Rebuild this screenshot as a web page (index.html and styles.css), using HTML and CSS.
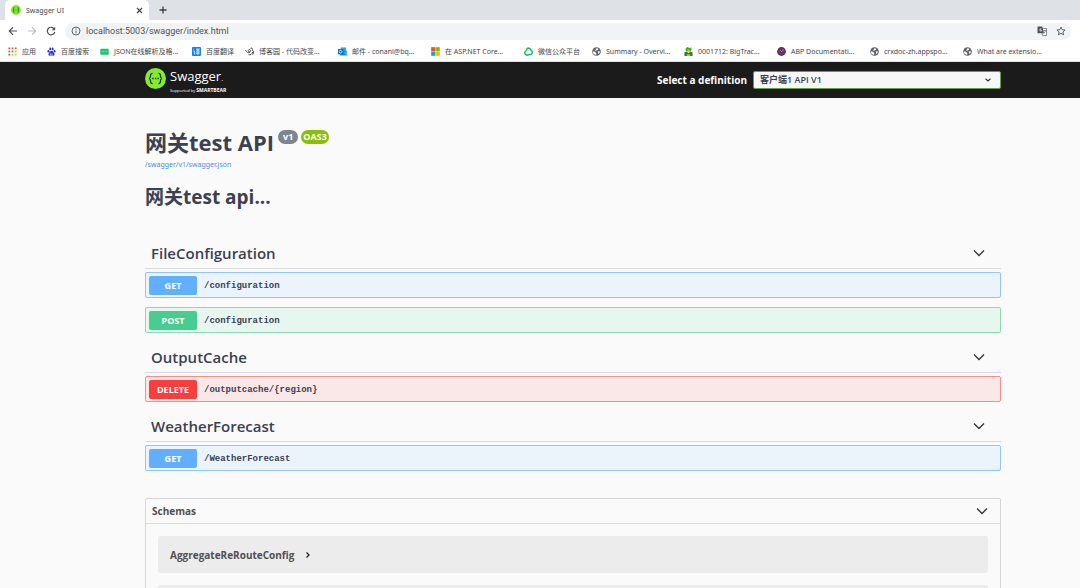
FILE: index.html
```
<!DOCTYPE html>
<html lang="en">
<head>
<meta charset="utf-8">
<title>Swagger UI</title>
<link rel="stylesheet" href="styles.css">
</head>
<body>
<svg class="defs" aria-hidden="true">
  <symbol id="globe" viewBox="0 0 10 10"><circle cx="5" cy="5" r="4.800" fill="#5f6368"/><path d="M.9 4.600l2.300.8 1.500 1.200v2C2.800 8.800.9 7.200.9 4.600zM5 1.300l2 .6-.6 1.300-1.400.4-.4.8-1.200-.6zM6.500 4.800l2.400.2-.8 2-1.400.4z" fill="#fff"/></symbol>
  <symbol id="chevron" viewBox="0 0 12 8"><path d="M1 1.500l5 5 5-5" fill="none" stroke="#333" stroke-width="1.300"/></symbol>
  <symbol id="swagger" viewBox="0 0 22 22"><circle cx="11" cy="11" r="11" fill="#85ea2d"/><path d="M8 5.500c-2 0-2.200.8-2.200 2.500C5.800 10 5.500 10.700 4.300 11c1.200.3 1.500 1 1.500 3 0 1.700.2 2.500 2.200 2.500M14 5.500c2 0 2.200.8 2.200 2.500 0 2 .3 2.700 1.500 3-1.200.3-1.500 1-1.500 3 0 1.700-.2 2.500-2.200 2.500" fill="none" stroke="#173647" stroke-width="1.300"/><path d="M7.500 11h1.500M10.300 11h1.500M13 11h1.500" stroke="#173647" stroke-width="1.500"/></symbol>
</svg>

<div class="tabstrip">
  <div class="tab">
    <svg class="tab-icon"><use href="#swagger"/></svg>
    <span class="tab-title">Swagger UI</span>
    <button class="icon-btn" aria-label="Close tab"><svg width="7" height="7" viewBox="0 0 7 7"><path d="M1 1l5 5M6 1L1 6" stroke="#3c4043" stroke-width="1.100"/></svg></button>
  </div>
  <button class="icon-btn new-tab" aria-label="New tab"><svg width="8" height="8" viewBox="0 0 8 8"><path d="M4 .5v7M.5 4h7" stroke="#3c4043" stroke-width="1.300"/></svg></button>
</div>

<div class="toolbar">
  <button class="icon-btn" aria-label="Back"><svg width="10" height="10" viewBox="0 0 10 10"><path d="M9 5H1.500M5 1.200L1.300 5 5 8.800" fill="none" stroke="#505357" stroke-width="1.200"/></svg></button>
  <button class="icon-btn" aria-label="Forward"><svg width="10" height="10" viewBox="0 0 10 10"><path d="M1 5h7.500M5 1.200L8.700 5 5 8.800" fill="none" stroke="#bbbdc0" stroke-width="1.200"/></svg></button>
  <button class="icon-btn" aria-label="Reload"><svg width="10" height="10" viewBox="0 0 10 10"><path d="M8.300 3A3.800 3.800 0 1 0 8.800 6" fill="none" stroke="#505357" stroke-width="1.200"/><path d="M9.200.8v3.400H5.800z" fill="#505357"/></svg></button>
  <div class="address">
    <svg width="10" height="10" viewBox="0 0 10 10"><circle cx="5" cy="5" r="4" fill="none" stroke="#5f6368"/><path d="M5 4.500v2.700M5 2.600v1.100" stroke="#5f6368"/></svg>
    <input class="url" type="text" aria-label="Address" value="localhost:5003/swagger/index.html">
    <button class="icon-btn" aria-label="Translate"><svg width="10" height="10" viewBox="0 0 10 10"><path d="M4 2.500h5.500v7H5.500z" fill="#fff" stroke="#6d7074" stroke-width=".8"/><path d="M.5.500h4.800l1.700 6.800H.5z" fill="#505357"/><path d="M4.500 3H3v2h1.400V4.200" fill="none" stroke="#fff" stroke-width=".7"/><path d="M6.300 4.500H9M7.800 3.800v.7M8.600 4.800L6.900 7.500" fill="none" stroke="#6d7074" stroke-width=".8"/></svg></button>
    <button class="icon-btn star" aria-label="Bookmark this page"><svg width="10" height="10" viewBox="0 0 10 10"><path d="M5 1l1.200 2.700 2.900.3-2.200 1.900.7 2.900L5 7.300 2.400 8.800l.7-2.900L.9 4l2.900-.3z" fill="none" stroke="#505357" stroke-width=".9"/></svg></button>
  </div>
</div>

<nav class="bookmarks">
  <a href="#"><svg viewBox="0 0 10 10"><path d="M.5.500h2v2h-2zM.5 7.500h2v2h-2z" fill="#ea4335"/><path d="M4 .5h2v2H4zM7.500.500h2v2h-2z" fill="#e8622d"/><path d="M.5 4h2v2h-2z" fill="#34a853"/><path d="M4 4h2v2H4z" fill="#4285f4"/><path d="M7.500 4h2v2h-2zM4 7.500h2v2H4zM7.500 7.500h2v2h-2z" fill="#fbbc05"/></svg><span>应用</span></a>
  <a href="#"><svg viewBox="0 0 10 10"><g fill="#2932e1"><ellipse cx="1.600" cy="4.700" rx="1.100" ry="1.400"/><ellipse cx="3.600" cy="2.100" rx="1.100" ry="1.500"/><ellipse cx="6.300" cy="2.100" rx="1.100" ry="1.500"/><ellipse cx="8.400" cy="4.600" rx="1.100" ry="1.400"/><path d="M5 4.200c1.500 0 1.800 1.500 3 2.700 1.200 1.500 0 3-1.500 2.700-1-.2-2-.2-3 0C2 9.900.8 8.400 2 6.900c1.200-1.200 1.500-2.700 3-2.700z"/></g><path d="M3.500 7.500h1v1.200h-1zM5.600 6.800v1.900h1.200" fill="none" stroke="#fff" stroke-width=".5"/></svg><span>百度搜索</span></a>
  <a href="#"><svg viewBox="0 0 10 10"><rect x=".3" y="2" width="9.400" height="6.500" rx="1" fill="#17c671"/><path d="M2 5.200h6" stroke="#a5efcb" stroke-dasharray="1 .6"/></svg><span>JSON在线解析及格...</span></a>
  <a href="#"><svg viewBox="0 0 10 10"><rect width="10" height="10" rx="1" fill="#1785e8"/><path d="M1.500 2.500l1 .7M1.500 4.500h1.200V8l1-.8M4.500 2.300h3.800L5 4.300M5 2.800l3.200 1.700M4.500 5.500h4M4.500 7h4M6.500 4.500V9" stroke="#fff" stroke-width=".8" fill="none"/></svg><span>百度翻译</span></a>
  <a href="#"><svg viewBox="0 0 10 10"><path d="M.5 3.500C2 6 3.500 7 5 6c2-1.500 1-4-.8-3-1.500 1-.5 3 1.500 2.500M6 1.500C8 .5 8.800 2 8 3.500c2 .5 1.800 3.500.5 5M4 8.500c2 1 4-1 4.500-3" fill="none" stroke="#464646" stroke-width="1.100"/></svg><span>博客园 - 代码改变...</span></a>
  <a href="#"><svg viewBox="0 0 10 10"><path d="M3 .5h6v4H3z" fill="#28a8ea"/><path d="M2.500 4.200h7.500v5.300H2.500z" fill="#1490df"/><path d="M6.500 7L10 4.500V9z" fill="#3cb9f2"/><rect y="2.300" width="5.800" height="5.800" fill="#0868b8"/><circle cx="2.900" cy="5.200" r="1.500" fill="none" stroke="#fff" stroke-width=".9"/></svg><span>邮件 - conanl@bq...</span></a>
  <a href="#"><svg viewBox="0 0 10 10"><path d="M.2.200h4.600v4.600H.2z" fill="#f25022"/><path d="M5.200.200h4.600v4.600H5.200z" fill="#7fba00"/><path d="M.2 5.200h4.600v4.600H.2z" fill="#00a4ef"/><path d="M5.200 5.200h4.600v4.600H5.200z" fill="#ffb900"/></svg><span>在 ASP.NET Core...</span></a>
  <a href="#"><svg viewBox="0 0 10 10"><path d="M2.700 4.300C2.500 2 4 1 5.500 1.300 7 1.500 7.800 2.700 7.600 4M7 3.700c2 .3 2.600 2 2 3.300-.7 1.500-2.300 1.800-3.600 1M6 8C4.500 9.300 2.500 9 1.500 8 .3 6.700.8 4.700 2.700 4.200" fill="none" stroke="#18c267" stroke-width="1.700"/></svg><span>微信公众平台</span></a>
  <a href="#"><svg><use href="#globe"/></svg><span>Summary - Overvi...</span></a>
  <a href="#"><svg viewBox="0 0 10 10"><path d="M2 1l2-1 2 1 2-.5L8.500 3 7 5H3L1.500 3z" fill="#45ad25"/><path d="M.5 6L3 5l2 2 2-2 2.500 1v4h-9z" fill="#267d25"/><path d="M4 3h2v3H4z" fill="#f4c430"/><path d="M3 8h4v2H3z" fill="#8bd149"/></svg><span>0001712: BigTrac...</span></a>
  <a href="#"><svg viewBox="0 0 10 10"><circle cx="5" cy="5" r="4.900" fill="#592c5d"/><circle cx="5" cy="5" r="2.800" fill="none" stroke="#b54b84" stroke-dasharray="1 .6"/><path d="M3.500 3.500L5.200 5.300 7 3" fill="none" stroke="#eab5d0" stroke-width=".7"/></svg><span>ABP Documentati...</span></a>
  <a href="#"><svg><use href="#globe"/></svg><span>crxdoc-zh.appspo...</span></a>
  <a href="#"><svg><use href="#globe"/></svg><span>What are extensio...</span></a>
</nav>

<header class="topbar">
  <a class="brand" href="#">
    <svg class="brand-mark"><use href="#swagger"/></svg>
    <span class="brand-text"><span class="brand-name">Swagger<small>.</small></span><span class="brand-sub">Supported by <b>SMARTBEAR</b></span></span>
  </a>
  <div class="definition">
    <label for="definition">Select a definition</label>
    <span class="select-wrap">
      <select id="definition"><option>客户端1 API V1</option></select>
      <svg class="select-arrow" viewBox="0 0 12 8"><path d="M1 1.500l5 4.500 5-4.500" fill="none" stroke="#333" stroke-width="2.200"/></svg>
    </span>
  </div>
</header>

<main class="content">
  <section class="info">
    <div class="title-row"><h1>网关test API</h1><span class="badge">v1</span><span class="badge oas">OAS3</span></div>
    <a class="spec-link" href="#">/swagger/v1/swagger.json</a>
    <h2>网关test api...</h2>
  </section>

  <section class="tag">
    <h3><button class="tag-head">FileConfiguration<svg class="chevron"><use href="#chevron"/></svg></button></h3>
    <button class="op get"><span class="method">GET</span><code>/configuration</code></button>
    <button class="op post"><span class="method">POST</span><code>/configuration</code></button>
  </section>
  <section class="tag">
    <h3><button class="tag-head">OutputCache<svg class="chevron"><use href="#chevron"/></svg></button></h3>
    <button class="op delete"><span class="method">DELETE</span><code>/outputcache/{region}</code></button>
  </section>
  <section class="tag">
    <h3><button class="tag-head">WeatherForecast<svg class="chevron"><use href="#chevron"/></svg></button></h3>
    <button class="op get"><span class="method">GET</span><code>/WeatherForecast</code></button>
  </section>

  <section class="schemas">
    <h4><button class="schemas-head">Schemas<svg class="chevron"><use href="#chevron"/></svg></button></h4>
    <div class="models">
      <button class="model">AggregateReRouteConfig<svg width="6" height="8" viewBox="0 0 6 8"><path d="M1.500 1.500L4 4 1.500 6.500" fill="none" stroke="#222" stroke-width="1.300"/></svg></button>
      <div class="model"></div>
    </div>
  </section>
</main>
</body>
</html>
```
FILE: styles.css
```
* { box-sizing: border-box; }
html, body { height: 100%; }
body {
  margin: 0;
  overflow: hidden;
  background: #fafafa;
  color: #3b4151;
  font-family: "Open Sans", "Noto Sans CJK SC", sans-serif;
}
button {
  margin: 0;
  padding: 0;
  border: 0;
  background: none;
  color: inherit;
  font: inherit;
  text-align: left;
}
a { text-decoration: none; }
h1, h2, h3, h4 { margin: 0; }
svg { display: block; flex: none; }
.defs { position: absolute; width: 0; height: 0; }
.icon-btn { flex: none; }

.tabstrip {
  display: flex;
  height: 20px;
  padding-left: 5px;
  background: #dee1e6;
}
.tab {
  display: flex;
  align-items: center;
  width: 144px;
  padding: 0 6px;
  border-radius: 5px 5px 0 0;
  background: #fff;
}
.tab-icon { width: 10px; height: 10px; }
.tab-title { flex: 1; margin-left: 5px; font-family: "Noto Sans", sans-serif; font-size: 7px; color: #45484c; }
.new-tab { padding: 0 10px; }

.toolbar {
  display: flex;
  align-items: center;
  gap: 9px;
  height: 22px;
  padding: 0 9px 0 8px;
  background: #fff;
}
.address {
  display: flex;
  flex: 1;
  align-items: center;
  gap: 5px;
  height: 17px;
  padding: 0 0 0 6px;
  border-radius: 9px;
  background: #f1f3f4;
}
.url {
  flex: 1;
  min-width: 0;
  padding: 0;
  border: 0;
  outline: 0;
  background: none;
  color: #505357;
  font: 9px/16px Roboto, sans-serif;
}
.star { margin: 0 5px 0 4px; }

.bookmarks {
  display: grid;
  grid-template-columns: 39px 53px 92px 53px 93px 93px 93px 68px 92px 93px 93px 93px 93px;
  align-items: center;
  height: 20px;
  padding-left: 8px;
  border-bottom: 1px solid #e1e3e6;
  background: #fff;
}
.bookmarks a {
  display: flex;
  align-items: center;
  gap: 5px;
  color: #45484c;
  font-family: "Noto Sans", "Noto Sans CJK SC", sans-serif;
  font-size: 7px;
  line-height: 12px;
  white-space: nowrap;
}
.bookmarks svg { width: 9px; height: 9px; }

.topbar {
  display: flex;
  align-items: center;
  justify-content: space-between;
  height: 36px;
  padding: 0 79px 0 145px;
  background: #1b1b1b;
  color: #fff;
}
.brand { display: flex; align-items: center; gap: 4px; color: #fff; }
.brand-mark { width: 21px; height: 21px; margin-bottom: 4px; }
.brand-text { display: flex; flex-direction: column; padding-top: 1px; }
.brand-name { font-size: 13px; line-height: 16px; }
.brand-name small { font-size: 7px; }
.brand-sub { font-size: 4px; line-height: 6px; }
.brand-sub b { font-size: 5px; letter-spacing: normal; }
.definition { display: flex; align-items: center; gap: 6px; font-size: 10px; font-weight: 700; }
.select-wrap { position: relative; }
.definition select {
  display: block;
  width: 248px;
  height: 18px;
  padding: 0 6px;
  border: 1px solid #62a03f;
  border-radius: 2px;
  appearance: none;
  background: #f7f7f7;
  color: #3b4151;
  font: 600 9px/16px "Open Sans", "Noto Sans CJK SC", sans-serif;
}
.select-arrow { position: absolute; top: 7px; right: 10px; width: 6px; height: 4px; }

.content { padding: 29px 79px 0 145px; }
.info { padding-bottom: 27px; }
.title-row { display: flex; align-items: flex-start; gap: 3px; }
h1 { margin-right: 1px; font-size: 22px; line-height: 30px; }
.badge {
  height: 14px;
  margin-top: 3px;
  padding: 0 5px;
  border-radius: 7px;
  background: #7d8492;
  color: #fff;
  font-size: 9px;
  font-weight: 700;
  line-height: 14px;
}
.badge.oas { padding: 0 2px; background: #89bf04; }
.spec-link {
  display: block;
  margin-top: 2px;
  color: #4990e2;
  font-family: "Noto Sans", sans-serif;
  font-size: 7px;
  line-height: 12px;
}
h2 { margin-top: 12px; font-size: 19px; line-height: 28px; }

.tag { margin-bottom: 9px; }
.tag-head {
  display: flex;
  align-items: center;
  justify-content: space-between;
  width: 100%;
  height: 31px;
  margin-bottom: 3px;
  padding: 0 16px 1px 6px;
  border-bottom: 1px solid #d8dade;
  font-size: 15px;
  font-weight: 600;
}
.chevron { width: 12px; height: 8px; }
.op {
  display: flex;
  align-items: center;
  gap: 7px;
  width: 100%;
  height: 26px;
  padding: 0 3px;
  border: 1px solid;
  border-radius: 2px;
}
.op + .op { margin-top: 9px; }
.method {
  width: 48px;
  border-radius: 2px;
  color: #fff;
  font-size: 9px;
  font-weight: 700;
  line-height: 19px;
  text-align: center;
}
.op code { padding-top: 2px; color: #3b4151; font: 700 9px/19px "Liberation Mono", monospace; }
.get { border-color: #90c6fc; background: #ebf3fb; }
.get .method { background: #61affe; }
.post { border-color: #8adbb4; background: #e8f6f0; }
.post .method { background: #49cc90; }
.delete { border-color: #fa8c8c; background: #fae7e7; }
.delete .method { background: #f93e3e; }

.schemas { margin-top: 27px; border: 1px solid #d5d7da; border-radius: 2px; }
.schemas-head {
  display: flex;
  align-items: center;
  justify-content: space-between;
  width: 100%;
  height: 25px;
  padding: 0 12px 0 6px;
  border-bottom: 1px solid #d8dade;
  color: #505050;
  font-size: 10px;
  font-weight: 700;
}
.models { display: grid; gap: 12px; padding: 12px; }
.model {
  display: flex;
  align-items: center;
  gap: 11px;
  height: 37px;
  padding: 0 12px;
  border-radius: 2px;
  background: #ececec;
  color: #505050;
  font-size: 10px;
  font-weight: 700;
}
```
